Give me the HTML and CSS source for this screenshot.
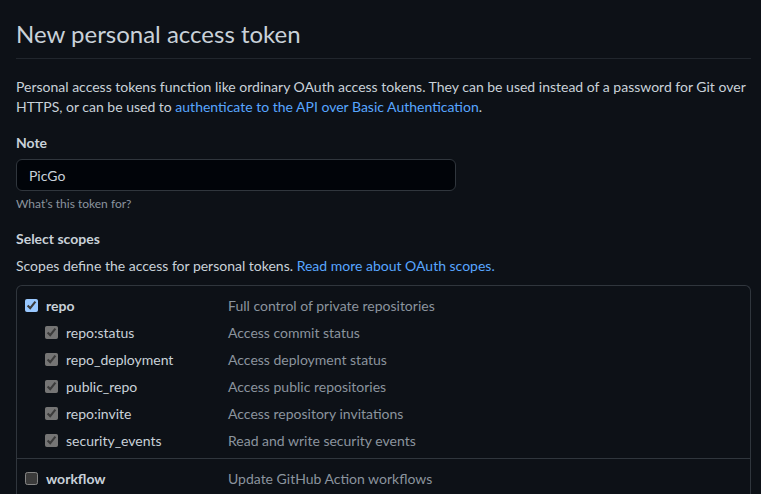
FILE: index.html
```html
<!DOCTYPE html>
<html lang="en">
<head>
<meta charset="utf-8">
<title>New personal access token</title>
<link rel="stylesheet" href="styles.css">
</head>
<body>
<main class="page">
  <h1 class="title">New personal access token</h1>
  <p class="intro">Personal access tokens function like ordinary OAuth access tokens. They can be used instead of a password for Git over HTTPS, or can be used to <a href="#">authenticate to the API over Basic Authentication</a>.</p>
  <div class="field">
    <label class="label note-label" for="note">Note</label>
    <input class="input" id="note" type="text" value="PicGo">
    <p class="hint">What’s this token for?</p>
  </div>
  <div class="field">
    <div class="label">Select scopes</div>
    <p class="desc">Scopes define the access for personal tokens. <a href="#">Read more about OAuth scopes.</a></p>
  </div>
  <div class="scopes">
    <div class="group">
      <label class="row main"><input type="checkbox" checked><span class="name">repo</span><span class="info">Full control of private repositories</span></label>
      <label class="row sub"><input type="checkbox" checked disabled><span class="name">repo:status</span><span class="info">Access commit status</span></label>
      <label class="row sub"><input type="checkbox" checked disabled><span class="name">repo_deployment</span><span class="info">Access deployment status</span></label>
      <label class="row sub"><input type="checkbox" checked disabled><span class="name">public_repo</span><span class="info">Access public repositories</span></label>
      <label class="row sub"><input type="checkbox" checked disabled><span class="name">repo:invite</span><span class="info">Access repository invitations</span></label>
      <label class="row sub"><input type="checkbox" checked disabled><span class="name">security_events</span><span class="info">Read and write security events</span></label>
    </div>
    <div class="group">
      <label class="row main"><input type="checkbox"><span class="name">workflow</span><span class="info">Update GitHub Action workflows</span></label>
    </div>
  </div>
</main>
</body>
</html>
```

FILE: styles.css
```css
html, body {
  margin: 0;
  padding: 0;
  background: #0d1117;
  color-scheme: dark;
}
body {
  font-family: Lato, "Noto Sans", sans-serif;
  font-size: 14px;
  line-height: 21px;
  color: #c9d1d9;
}
.page {
  padding: 16px 10px 0 16px;
}
a {
  color: #58a6ff;
  text-decoration: none;
}
.title {
  margin: 0;
  font-size: 24px;
  font-weight: 400;
  line-height: 36px;
  padding-bottom: 6px;
  border-bottom: 1px solid #21262d;
  color: #c9d1d9;
}
.intro {
  margin: 18px 0 0 0;
  line-height: 20px;
}
.field {
  margin-top: 15px;
}
.label {
  display: block;
  font-weight: 700;
  margin-bottom: 6px;
}
.input {
  display: block;
  box-sizing: border-box;
  width: 440px;
  height: 32px;
  padding: 5px 12px;
  background: #010409;
  border: 1px solid #30363d;
  border-radius: 6px;
  color: #c9d1d9;
  font: inherit;
}
.hint {
  margin: 4px 0 0 0;
  font-size: 12px;
  line-height: 18px;
  color: #8b949e;
}
.field + .field {
  margin-top: 15px;
}
.desc {
  margin: 0;
}
.scopes {
  margin-top: 9px;
  border: 1px solid #30363d;
  border-bottom: none;
  border-radius: 6px 6px 0 0;
}
.group {
  padding: 6px 0 4px;
}
.group + .group {
  border-top: 1px solid #30363d;
  padding-top: 6px;
}
.row {
  display: flex;
  align-items: center;
  height: 27px;
}
.row input {
  margin: 0 8px 0 0;
  width: 13px;
  height: 13px;
}
.main {
  padding-left: 8px;
}
.main .name {
  font-weight: 700;
  width: 182px;
}
.sub {
  padding-left: 28px;
}
.sub .name {
  width: 162px;
}
.info {
  color: #8b949e;
}
```
